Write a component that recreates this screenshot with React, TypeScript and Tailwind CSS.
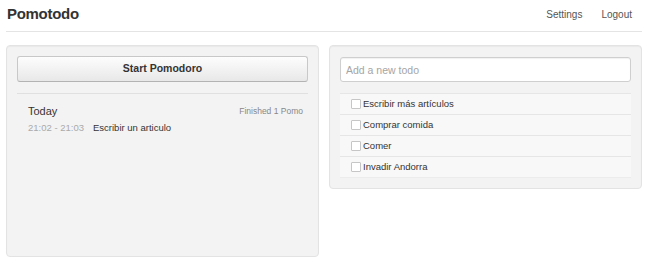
const todos = ["Escribir más artículos", "Comprar comida", "Comer", "Invadir Andorra"];

function Header() {
  return (
    <header className="flex h-[32px] items-center justify-between border-b border-[#e4e4e4] pb-[3px]">
      <h1 className="pl-[1px] text-[15px] font-bold tracking-[-0.3px] text-[#333]">Pomotodo</h1>
      <nav className="flex gap-[19px] pr-[10px] text-[10px] text-[#555]">
        <a href="#">Settings</a>
        <a href="#">Logout</a>
      </nav>
    </header>
  );
}

function PomodoroPanel() {
  return (
    <section className="flex h-[212px] flex-col rounded-[4px] border border-[#e3e3e3] bg-[#f3f3f3] p-[10px] shadow-[inset_0_1px_1px_rgba(0,0,0,0.04)]">
      <button className="h-[26px] w-full rounded-[3px] border border-[#c8c8c8] border-b-[#b3b3b3] bg-gradient-to-b from-[#fdfdfd] to-[#e8e8e8] text-[10.5px] font-bold text-[#333] shadow-[inset_0_1px_0_rgba(255,255,255,0.3)]">
        Start Pomodoro
      </button>
      <div className="mt-[11px] border-t border-[#e0e0e0] pl-[11px] pr-[5px] pt-[10px]">
        <div className="flex h-[14px] items-center justify-between">
          <span className="text-[11px] text-[#333]">Today</span>
          <span className="text-[8.5px] text-[#888]">Finished 1 Pomo</span>
        </div>
        <div className="mt-[3px] flex h-[14px] items-center gap-[9px] text-[9.5px]">
          <span className="text-[#aaa]">21:02 - 21:03</span>
          <span className="text-[#333]">Escribir un articulo</span>
        </div>
      </div>
    </section>
  );
}

function TodoPanel() {
  return (
    <section className="flex flex-col self-start rounded-[4px] border border-[#e3e3e3] bg-[#f3f3f3] p-[10px] shadow-[inset_0_1px_1px_rgba(0,0,0,0.04)]">
      <input
        placeholder="Add a new todo"
        className="mt-[1px] h-[25px] w-full rounded-[3px] border border-[#cfcfcf] bg-white px-[5px] text-[10.5px] text-[#333] shadow-[inset_0_1px_1px_rgba(0,0,0,0.06)] outline-none placeholder:text-[#a5a5a5]"
      />
      <ul className="mt-[11px] border-b border-[#ececec] bg-[#f8f8f8]">
        {todos.map((todo) => (
          <li key={todo} className="flex h-[21px] items-center gap-[2px] border-t border-[#e6e6e6] pl-[11px] text-[9.5px] text-[#333]">
            <span className="block size-[10px] rounded-[1px] border border-[#c6c6c6] bg-white" />
            <span>{todo}</span>
          </li>
        ))}
      </ul>
    </section>
  );
}

export default function App() {
  return (
    <div className="min-h-[266px] bg-white pl-[6px] pr-[8px] font-['Liberation_Sans',Arial,sans-serif]">
      <Header />
      <main className="mt-[13px] grid grid-cols-2 gap-[10px]">
        <PomodoroPanel />
        <TodoPanel />
      </main>
    </div>
  );
}
